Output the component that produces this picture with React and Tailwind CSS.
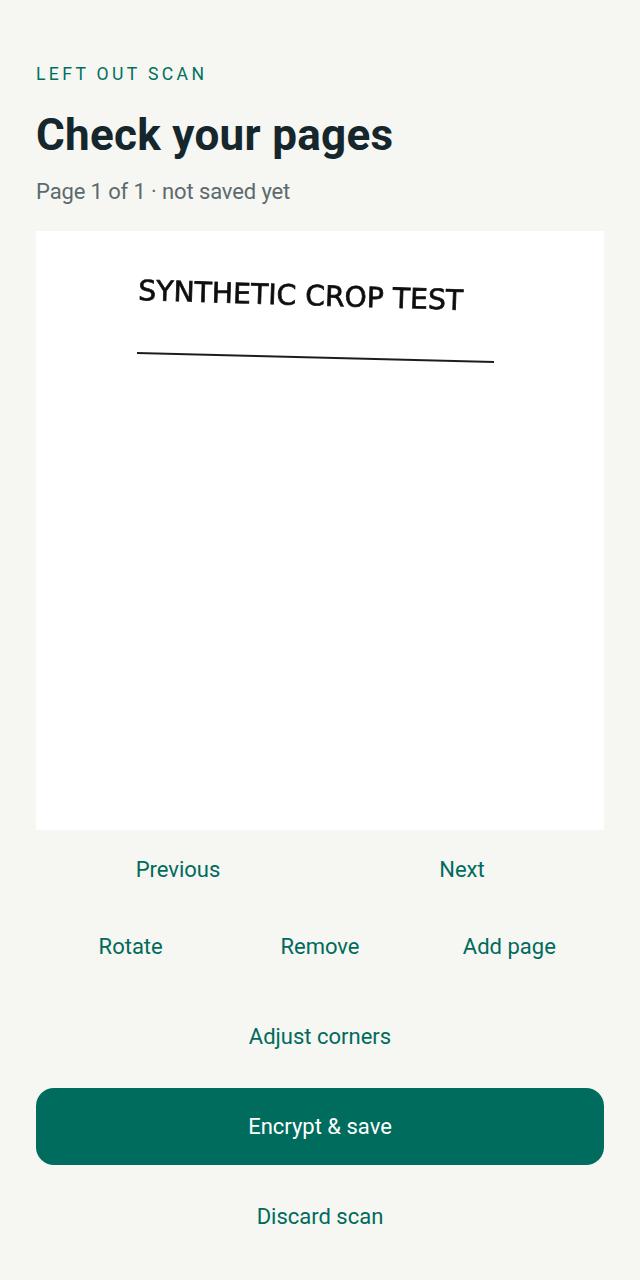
import React from "react";

export default function App() {
  return (
    <div className="min-h-screen bg-[#f6f6f2] px-[36px] pt-[62px] pb-[20px] font-['Roboto',sans-serif]">
      <p className="text-[17.6px] leading-[24px] tracking-[0.19em] text-[#00705f]">LEFT OUT SCAN</p>
      <h1 className="mt-[23px] text-[44px] leading-[52px] font-bold tracking-[0.3px] text-[#15262d]">Check your pages</h1>
      <p className="mt-[15.5px] text-[22px] leading-[30px] tracking-[-0.12px] text-[#5b6a6e]">Page 1 of 1 · not saved yet</p>
      <div className="mt-[24.5px] h-[599px] bg-white">
        <svg width="568" height="599" viewBox="0 0 568 599" className="block">
          <defs>
            <filter id="soft" x="-5%" y="-50%" width="110%" height="200%">
              <feGaussianBlur stdDeviation="0.5" />
            </filter>
          </defs>
          <g filter="url(#soft)">
            <text
              x="102"
              y="69"
              transform="rotate(1.75 102 69)"
              fontFamily="'DejaVu Sans', sans-serif"
              fontSize="28"
              fill="#111111"
              stroke="#111111"
              strokeWidth="0.7"
              textLength="325"
              lengthAdjust="spacingAndGlyphs"
            >
              SYNTHETIC CROP TEST
            </text>
            <line x1="101" y1="122" x2="458" y2="131" stroke="#1f1f1f" strokeWidth="2.2" />
          </g>
        </svg>
      </div>
      <div className="mt-[1px] grid grid-cols-2">
        <button className="h-[77px] text-[22px] text-[#006b5d]">Previous</button>
        <button className="h-[77px] text-[22px] text-[#006b5d]">Next</button>
      </div>
      <div className="grid grid-cols-3">
        <button className="h-[77px] text-[22px] text-[#006b5d]">Rotate</button>
        <button className="h-[77px] text-[22px] text-[#006b5d]">Remove</button>
        <button className="h-[77px] text-[22px] text-[#006b5d]">Add page</button>
      </div>
      <button className="mt-[13px] block h-[77px] w-full text-[22px] text-[#006b5d]">Adjust corners</button>
      <button className="mt-[13px] block h-[77px] w-full rounded-[18px] bg-[#006c5e] text-[22px] text-white">Encrypt &amp; save</button>
      <button className="mt-[13px] block h-[77px] w-full text-[22px] text-[#006b5d]">Discard scan</button>
    </div>
  );
}
